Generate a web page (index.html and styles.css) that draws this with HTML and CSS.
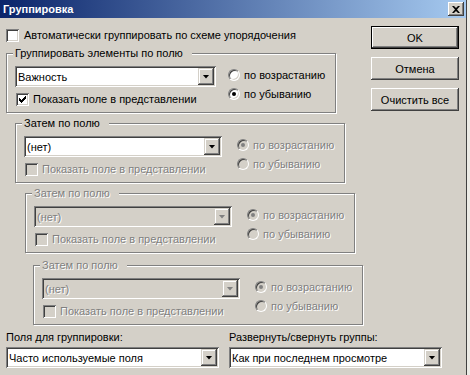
FILE: index.html
```html
<!DOCTYPE html>
<html lang="ru">
<head>
  <meta charset="UTF-8" />
  <title>Группировка</title>
  <link rel="stylesheet" href="styles.css">
</head>
<body>

  <div class="window">
    <!-- Title bar -->
    <div class="titlebar">
      <span class="title">Группировка</span>
      <span class="close-btn">
        <svg width="8" height="7" viewBox="0 0 8 7"><path d="M0 0h2l2 2 2-2h2L5 3.5 8 7H6L4 5 2 7H0l3-3.5z" fill="#000"/></svg>
      </span>
    </div>

    <div class="content">
      <div class="main">
        <div class="check auto"><span class="box"></span>Автоматически группировать по схеме упорядочения</div>

        <!-- Group 1 -->
        <fieldset class="group g1">
          <legend>Группировать элементы по полю</legend>
          <div class="group-body">
            <div class="field-col">
              <div class="combo wide"><span class="value">Важность</span><span class="drop"></span></div>
              <div class="check"><span class="box checked">
                <svg width="7" height="7" viewBox="0 0 7 7"><path d="M0 2H1V3H2V4H3V3H4V2H5V1H6V0H7V3H6V4H5V5H4V6H3V7H2V6H1V5H0Z" fill="#000"/></svg>
              </span>Показать поле в представлении</div>
            </div>
            <div class="radios">
              <div class="radio"><span class="dot"></span>по возрастанию</div>
              <div class="radio"><span class="dot on"></span>по убыванию</div>
            </div>
          </div>
        </fieldset>

        <!-- Group 2 -->
        <fieldset class="group g2">
          <legend>Затем по полю</legend>
          <div class="group-body">
            <div class="field-col">
              <div class="combo"><span class="value">(нет)</span><span class="drop"></span></div>
              <div class="check disabled"><span class="box"></span>Показать поле в представлении</div>
            </div>
            <div class="radios disabled">
              <div class="radio"><span class="dot on"></span>по возрастанию</div>
              <div class="radio"><span class="dot"></span>по убыванию</div>
            </div>
          </div>
        </fieldset>

        <!-- Group 3 -->
        <fieldset class="group g3 disabled">
          <legend>Затем по полю</legend>
          <div class="group-body">
            <div class="field-col">
              <div class="combo"><span class="value">(нет)</span><span class="drop"></span></div>
              <div class="check"><span class="box"></span>Показать поле в представлении</div>
            </div>
            <div class="radios">
              <div class="radio"><span class="dot on"></span>по возрастанию</div>
              <div class="radio"><span class="dot"></span>по убыванию</div>
            </div>
          </div>
        </fieldset>

        <!-- Group 4 -->
        <fieldset class="group g4 disabled">
          <legend>Затем по полю</legend>
          <div class="group-body">
            <div class="field-col">
              <div class="combo"><span class="value">(нет)</span><span class="drop"></span></div>
              <div class="check"><span class="box"></span>Показать поле в представлении</div>
            </div>
            <div class="radios">
              <div class="radio"><span class="dot on"></span>по возрастанию</div>
              <div class="radio"><span class="dot"></span>по убыванию</div>
            </div>
          </div>
        </fieldset>
      </div>

      <!-- Buttons -->
      <div class="buttons">
        <div class="btn default">OK</div>
        <div class="btn">Отмена</div>
        <div class="btn">Очистить все</div>
      </div>
    </div>

    <!-- Bottom fields -->
    <div class="bottom">
      <div class="bottom-field">
        <div class="label">Поля для группировки:</div>
        <div class="combo"><span class="value">Часто используемые поля</span><span class="drop"></span></div>
      </div>
      <div class="bottom-field">
        <div class="label">Развернуть/свернуть группы:</div>
        <div class="combo"><span class="value">Как при последнем просмотре</span><span class="drop"></span></div>
      </div>
    </div>
  </div>

</body>
</html>
```

FILE: styles.css
```css
* {
  margin: 0;
  padding: 0;
  box-sizing: border-box;
}

body {
  width: 470px;
  height: 375px;
  overflow: hidden;
  background: #ecebe6;
  font-family: 'Liberation Sans', Arial, sans-serif;
  font-size: 11px;
  color: #000;
}

.window {
  width: 467px;
  height: 375px;
  background: #d4d0c8;
  border-right: 1px solid #404040;
}

/* ========== Title bar ========== */
.titlebar {
  height: 18px;
  display: flex;
  align-items: center;
  justify-content: space-between;
  padding: 0 2px 0 3px;
  background: linear-gradient(to right, #0a246a, #a6caf0);
}

.title {
  color: #fff;
  font-weight: bold;
}

.close-btn {
  width: 16px;
  height: 14px;
  display: flex;
  align-items: center;
  justify-content: center;
  background: #d4d0c8;
  box-shadow: inset -1px -1px #404040, inset 1px 1px #fff, inset -2px -2px #808080;
}

/* ========== Layout ========== */
.content {
  display: flex;
}

.main {
  width: 371px;
  padding-top: 11px;
}

.buttons {
  display: flex;
  flex-direction: column;
  gap: 8px;
  padding-top: 8px;
}

/* ========== Checkbox ========== */
.check {
  display: flex;
  align-items: center;
  height: 13px;
  line-height: 13px;
  white-space: nowrap;
}

.check.auto {
  margin-left: 6px;
}

.check .box {
  width: 13px;
  height: 13px;
  margin-right: 5px;
  flex: none;
  display: flex;
  align-items: center;
  justify-content: center;
  background: #fff;
  box-shadow: inset 1px 1px #808080, inset -1px -1px #fff, inset 2px 2px #404040, inset -2px -2px #d4d0c8;
}

.field-col .check {
  margin-left: 1px;
}

.field-col .check .box {
  margin-right: 4px;
}

/* ========== Group boxes ========== */
.group {
  width: 330px;
  border: 1px solid #808080;
  box-shadow: inset 1px 1px #fff, 1px 1px #fff;
  padding: 6px 8px 6px 8px;
  margin-top: 4px;
}

.group legend {
  line-height: 13px;
  margin-left: -2px;
  padding: 0 9px 0 2px;
  background: #d4d0c8;
}

.g1 { margin-left: 6px; margin-top: 5px; }
.g2 { margin-left: 15px; }
.g3 { margin-left: 25px; }
.g4 { margin-left: 33px; margin-top: 6px; }

.group-body {
  display: grid;
  grid-template-columns: 213px auto;
}

.field-col {
  display: flex;
  flex-direction: column;
  gap: 6px;
}

.radios {
  display: flex;
  flex-direction: column;
  gap: 6px;
  padding-top: 2px;
}

/* ========== Radio ========== */
.radio {
  display: flex;
  align-items: center;
  height: 13px;
  white-space: nowrap;
}

.radio .dot {
  width: 12px;
  height: 12px;
  margin-right: 4px;
  flex: none;
  border-radius: 50%;
  border: 1px solid;
  border-color: #808080 #fff #fff #808080;
  background: #fff;
  box-shadow: inset 1px 1px #404040, inset -1px -1px #d4d0c8;
  display: flex;
  align-items: center;
  justify-content: center;
}

.radio .dot.on::after {
  content: "";
  width: 4px;
  height: 4px;
  border-radius: 50%;
  background: #000;
}

/* ========== Combo box ========== */
.combo {
  width: 198px;
  height: 21px;
  display: flex;
  align-items: center;
  padding: 2px;
  background: #fff;
  box-shadow: inset 1px 1px #808080, inset -1px -1px #fff, inset 2px 2px #404040, inset -2px -2px #d4d0c8;
  white-space: nowrap;
}

.combo.wide {
  width: 201px;
}

.combo .value {
  padding-left: 1px;
}

.combo .drop {
  margin-left: auto;
  width: 16px;
  height: 17px;
  flex: none;
  display: flex;
  align-items: center;
  justify-content: center;
  background: #d4d0c8;
  box-shadow: inset -1px -1px #404040, inset 1px 1px #d4d0c8, inset -2px -2px #808080, inset 2px 2px #fff;
}

.combo .drop::after {
  content: "";
  width: 7px;
  height: 4px;
  background: #000;
  clip-path: polygon(0 0, 100% 0, 50% 100%);
}

/* ========== Disabled state ========== */
.disabled .check,
.check.disabled,
.radios.disabled .radio,
.disabled .radio,
.disabled legend,
.disabled .combo .value {
  color: #808080;
  text-shadow: 1px 1px 0 #fff;
}

.disabled .check .box,
.check.disabled .box,
.disabled .radio .dot,
.disabled .combo {
  background: #d4d0c8;
}

.disabled .radio .dot.on::after {
  background: #808080;
}

.disabled .combo .drop::after {
  background: #808080;
  filter: drop-shadow(1px 1px 0 #fff);
}

/* ========== Buttons ========== */
.btn {
  width: 88px;
  height: 23px;
  display: flex;
  align-items: center;
  justify-content: center;
  background: #d4d0c8;
  box-shadow: inset -1px -1px #404040, inset 1px 1px #fff, inset -2px -2px #808080, inset 2px 2px #d4d0c8;
}

.btn.default {
  border: 1px solid #000;
}

/* ========== Bottom fields ========== */
.bottom {
  display: grid;
  grid-template-columns: 213px 213px;
  column-gap: 10px;
  padding: 6px 0 0 6px;
}

.bottom .label {
  line-height: 13px;
  margin-bottom: 3px;
}

.bottom .combo {
  width: 213px;
}
```
